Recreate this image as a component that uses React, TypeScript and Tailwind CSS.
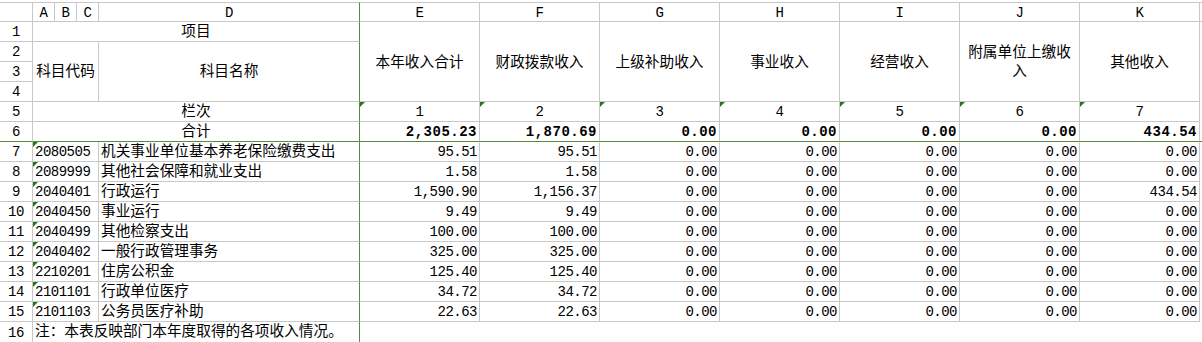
import React from 'react';

const rows = [
  ['2080505', '机关事业单位基本养老保险缴费支出', '95.51', '95.51', '0.00', '0.00', '0.00', '0.00', '0.00'],
  ['2089999', '其他社会保障和就业支出', '1.58', '1.58', '0.00', '0.00', '0.00', '0.00', '0.00'],
  ['2040401', '行政运行', '1,590.90', '1,156.37', '0.00', '0.00', '0.00', '0.00', '434.54'],
  ['2040450', '事业运行', '9.49', '9.49', '0.00', '0.00', '0.00', '0.00', '0.00'],
  ['2040499', '其他检察支出', '100.00', '100.00', '0.00', '0.00', '0.00', '0.00', '0.00'],
  ['2040402', '一般行政管理事务', '325.00', '325.00', '0.00', '0.00', '0.00', '0.00', '0.00'],
  ['2210201', '住房公积金', '125.40', '125.40', '0.00', '0.00', '0.00', '0.00', '0.00'],
  ['2101101', '行政单位医疗', '34.72', '34.72', '0.00', '0.00', '0.00', '0.00', '0.00'],
  ['2101103', '公务员医疗补助', '22.63', '22.63', '0.00', '0.00', '0.00', '0.00', '0.00'],
];

const totals = ['2,305.23', '1,870.69', '0.00', '0.00', '0.00', '0.00', '434.54'];
const heads = ['本年收入合计', '财政拨款收入', '上级补助收入', '事业收入', '经营收入', '附属单位上缴收入', '其他收入'];
const letters = ['E', 'F', 'G', 'H', 'I', 'J', 'K'];

const base = 'flex items-center border-r border-b border-[#c8c8c8] overflow-hidden';
const cell = `${base} whitespace-nowrap leading-none pt-[1px]`;
const cjk = 'text-[14.67px]';
const num = 'text-[14px] tracking-[-0.5px]';

function Tri() {
  return <span className="absolute left-0 top-0 w-0 h-0 border-t-[5px] border-t-[#1f7a1f] border-r-[5px] border-r-transparent" />;
}

function RowHead({ n, green }: { n: number; green?: boolean }) {
  return (
    <div className={`${cell} ${num} justify-center ${green ? 'border-b-[#5b8c3a]' : ''}`}>{n}</div>
  );
}

export default function App() {
  return (
    <div className="w-[1202px] h-[342px] bg-white pt-[2px] text-black font-['Liberation_Mono','Noto_Sans_CJK_SC',monospace] overflow-hidden">
      <div className="grid grid-cols-[33px_22px_22px_22px_261px_repeat(7,120px)_2px] grid-rows-[repeat(17,20px)]">
        {/* column header */}
        <div className={`${cell} border-t`} />
        {['A', 'B', 'C'].map(l => (
          <div key={l} className={`${cell} ${num} border-t justify-center`}>{l}</div>
        ))}
        <div className={`${cell} ${num} border-t justify-center border-r-[#5b8c3a]`}>D</div>
        {letters.map(l => (
          <div key={l} className={`${cell} ${num} border-t justify-center`}>{l}</div>
        ))}
        <div className="border-t border-b border-[#c8c8c8]" />

        {/* row 1 */}
        <RowHead n={1} />
        <div className={`${cell} ${cjk} col-span-4 justify-center border-r-[#5b8c3a]`}>项目</div>
        {heads.map(h => (
          <div key={h} className={`${base} ${cjk} row-span-4 justify-center pt-[3px]`}>
            <span className="block w-[108px] text-center whitespace-normal leading-[19px]">{h}</span>
          </div>
        ))}
        <div />

        {/* rows 2-4 */}
        <RowHead n={2} />
        <div className={`${cell} ${cjk} col-span-3 row-span-3 justify-center`}>科目代码</div>
        <div className={`${cell} ${cjk} row-span-3 justify-center border-r-[#5b8c3a]`}>科目名称</div>
        <div />
        <RowHead n={3} />
        <div />
        <RowHead n={4} />
        <div />

        {/* row 5 */}
        <RowHead n={5} />
        <div className={`${cell} ${cjk} col-span-4 justify-center border-r-[#5b8c3a]`}>栏次</div>
        {letters.map((l, i) => (
          <div key={l} className={`${cell} ${num} relative justify-center`}>
            <Tri />
            {i + 1}
          </div>
        ))}
        <div />

        {/* row 6 totals */}
        <RowHead n={6} green />
        <div className={`${cell} ${cjk} col-span-4 justify-center border-r-[#5b8c3a] border-b-[#5b8c3a]`}>合计</div>
        {totals.map((t, i) => (
          <div key={i} className={`${cell} text-[14px] justify-end pr-[2px] font-bold tracking-[0.5px] border-b-[#5b8c3a]`}>{t}</div>
        ))}
        <div className="border-b border-[#5b8c3a]" />

        {/* data rows */}
        {rows.map((r, idx) => (
          <React.Fragment key={r[0]}>
            <RowHead n={idx + 7} />
            <div className={`${cell} ${num} col-span-3 relative pl-[2px]`}>
              <Tri />
              {r[0]}
            </div>
            <div className={`${cell} ${cjk} pl-[2px] border-r-[#5b8c3a]`}>{r[1]}</div>
            {r.slice(2).map((v, i) => (
              <div key={i} className={`${cell} ${num} justify-end pr-[2px]`}>{v}</div>
            ))}
            <div />
          </React.Fragment>
        ))}

        {/* row 16 note */}
        <div className={`flex items-center justify-center border-r border-[#c8c8c8] leading-none pt-[1px] ${num}`}>16</div>
        <div className={`col-span-4 flex items-center pl-[2px] pt-[1px] border-r border-[#5b8c3a] whitespace-nowrap leading-none ${cjk}`}>
          注：本表反映部门本年度取得的各项收入情况。
        </div>
      </div>
    </div>
  );
}
